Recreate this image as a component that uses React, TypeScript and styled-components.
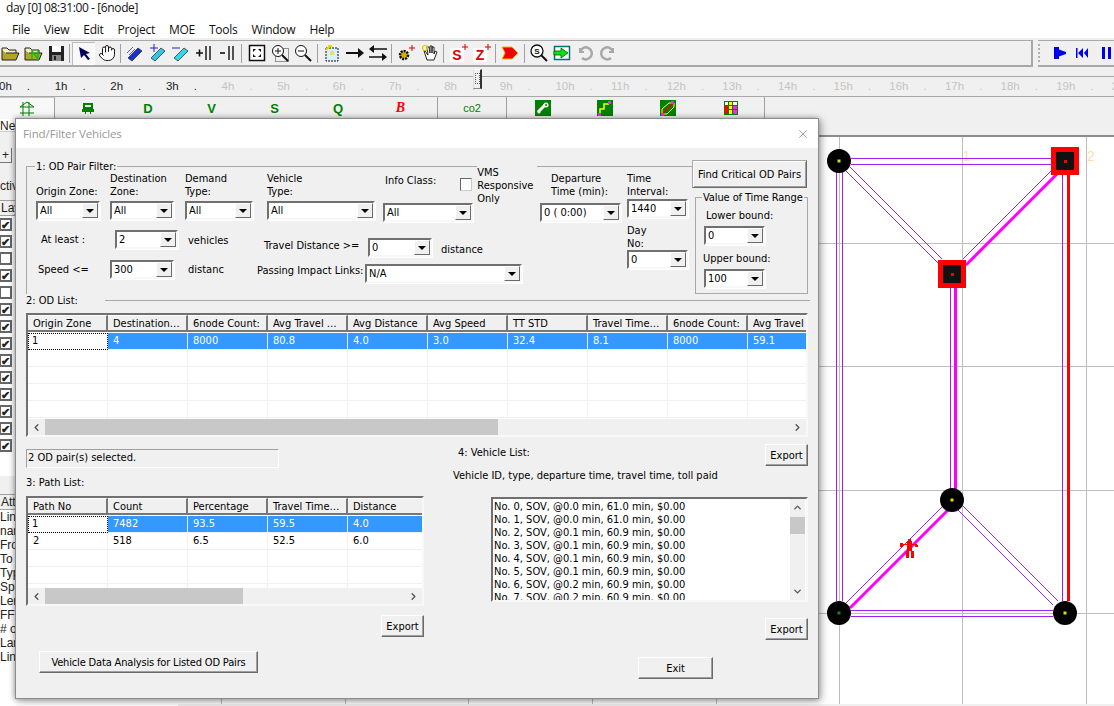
import React from "react";
import styled, { createGlobalStyle } from "styled-components";
import { Hand, ChevronLeft, ChevronRight, ChevronUp, ChevronDown, X } from "lucide-react";

const Global = createGlobalStyle`
	html, body {
		margin: 0;
		padding: 0;
		background: #fff;
		overflow: hidden;
	}
	* { box-sizing: border-box; }
`;

const UI = `"DejaVu Sans Condensed", "DejaVu Sans", sans-serif`;
const SEGOE = `"Open Sans", "Noto Sans", sans-serif`;

const Page = styled.div`
	position: relative;
	display: flex;
	flex-direction: column;
	width: 1114px;
	height: 706px;
	overflow: hidden;
	background: #fff;
	font-family: ${UI};
	font-stretch: condensed;
	font-size: 11px;
	color: #000;
`;

/* ---- window chrome ---- */
const TitleBar = styled.div`
	height: 18px;
	padding: 0 0 0 6px;
	font-family: ${SEGOE};
	font-stretch: normal;
	font-size: 12px;
	letter-spacing: -0.38px;
	line-height: 16px;
	color: #111;
`;

const MenuBar = styled.div`
	display: flex;
	align-items: center;
	gap: 14px;
	height: 20px;
	padding-left: 12px;
	padding-top: 2px;
	font-family: ${SEGOE};
	font-stretch: normal;
	font-size: 12px;
	letter-spacing: -0.25px;
	color: #111;
`;

const ToolStrip = styled.div`
	display: flex;
	height: 29px;
	background: #f0f0f0;
	padding-top: 2px;
`;

const MainTools = styled.div`
	display: flex;
	align-items: center;
	flex: none;
	width: 1035px;
	height: 27px;
	margin-left: -2px;
	border-top: 1px solid #a8a8a8;
	border-bottom: 2px solid #a8a8a8;
	border-right: 2px solid #a8a8a8;
`;

const SideTools = styled.div`
	display: flex;
	align-items: center;
	flex: 1;
	height: 27px;
	margin-left: 5px;
	border-top: 1px solid #a8a8a8;
	border-bottom: 2px solid #a8a8a8;
`;

const Grip = styled.div`
	flex: none;
	width: 2px;
	height: 18px;
	margin-right: 8px;
	border-left: 2px dotted #b0b0b0;
`;

const ToolBtn = styled.div<{ $on?: boolean }>`
	display: flex;
	align-items: center;
	justify-content: center;
	flex: none;
	width: 23px;
	height: 23px;
	background: ${(p) => (p.$on ? "#f8f8f8" : "transparent")};
	box-shadow: ${(p) => (p.$on ? "inset 1px 1px 0 #bbb, inset -1px -1px 0 #fff" : "none")};
`;

const ToolSep = styled.div<{ $w?: number }>`
	flex: none;
	display: flex;
	justify-content: center;
	width: ${(p) => p.$w ?? 5}px;
	height: 19px;
	&::before {
		content: "";
		width: 1px;
		background: #a0a0a0;
	}
`;

const Timeline = styled.div`
	position: relative;
	height: 30px;
	padding-top: 9px;
	background: #f0f0f0;
	border-bottom: 1px solid #a8a8a8;
`;

const Ticks = styled.div`
	display: flex;
	height: 20px;
	padding-top: 2px;
	margin-left: -1px;
	border-top: 1px solid #a8a8a8;
	font-family: "Liberation Sans", sans-serif;
	font-stretch: normal;
	font-size: 11.5px;
	line-height: 14px;
`;

const Tick = styled.div<{ $off?: boolean }>`
	display: flex;
	flex: none;
	width: 55.65px;
	color: ${(p) => (p.$off ? "#c4c4c4" : "#222")};
`;

const TickDot = styled.span`
	margin-left: 15px;
`;

const Thumb = styled.div`
	position: absolute;
	left: 473px;
	top: 2px;
	width: 9px;
	height: 20px;
	background: #f0f0f0;
	border: 1px solid #888;
	border-top-color: #fff;
	border-left-color: #ddd;
	border-right: 2px solid #333;
	&::after {
		content: "";
		display: block;
		width: 3px;
		height: 9px;
		margin: 3px auto 0;
		border: 1px dotted #555;
	}
`;

const TabRow = styled.div`
	display: flex;
	height: 22px;
	background: #f0f0f0;
`;

const TabCell = styled.div<{ $w: number; $sep?: boolean; $on?: boolean; $pl?: number; $pr?: number }>`
	display: flex;
	align-items: center;
	justify-content: center;
	flex: none;
	width: ${(p) => p.$w}px;
	padding: 0 ${(p) => p.$pr ?? 0}px 0 ${(p) => p.$pl ?? 0}px;
	font-family: "Liberation Sans", sans-serif;
	font-stretch: normal;
	font-size: 13px;
	font-weight: 700;
	color: #008000;
	border-right: ${(p) => (p.$sep ? "1px solid #a0a0a0" : "0")};
	background: ${(p) => (p.$on ? "#f8f8f8" : "transparent")};
	border-top: ${(p) => (p.$on ? "1px solid #ccc" : "0")};
`;

const BLetter = styled.span`
	font-family: "Liberation Serif", serif;
	font-style: italic;
	color: #f00;
	font-size: 14px;
`;

const CoLabel = styled.span`
	font-family: "Liberation Sans", sans-serif;
	font-weight: 400;
	font-size: 11px;
`;

const Workspace = styled.div`
	display: flex;
	flex: 1;
	min-height: 0;
`;

/* ---- panel behind the dialog ---- */
const LeftPanel = styled.div`
	display: flex;
	flex-direction: column;
	flex: none;
	width: 178px;
	background: #fff;
	font-family: "Liberation Sans", sans-serif;
	font-stretch: normal;
	font-size: 12px;
	line-height: 14px;
	color: #222;
`;

const NameRow = styled.div`
	height: 13px;
	border-bottom: 1px solid #ccc;
`;

const GreyBlock = styled.div<{ $h: number }>`
	height: ${(p) => p.$h}px;
	background: #f0f0f0;
`;

const PlusBtn = styled.div`
	width: 12px;
	height: 15px;
	margin: 16px 0 16px;
	text-align: center;
	background: #f0f0f0;
	border-right: 1px solid #777;
	border-bottom: 1px solid #777;
`;

const HeadCell = styled.div`
	height: 16px;
	padding: 0 0 0 1px;
	background: #f0f0f0;
	border-top: 1px solid #a0a0a0;
	border-bottom: 1px solid #a0a0a0;
`;

const Checks = styled.div`
	display: flex;
	flex-direction: column;
	gap: 4px;
	padding-top: 2px;
	height: 260px;
`;

const CheckBox = styled.div`
	display: flex;
	align-items: center;
	justify-content: center;
	width: 12px;
	height: 13px;
	background: #fff;
	border: 2px solid #666;
	border-left-width: 1px;
	font-size: 11px;
	font-weight: 700;
	line-height: 10px;
`;

const Attr = styled.div`
	height: 14px;
	white-space: nowrap;
`;

const CanvasCol = styled.div`
	display: flex;
	flex-direction: column;
	flex: 1;
	min-width: 0;
`;

const CanvasTop = styled.div`
	height: 18px;
	background: #f0f0f0;
	border-bottom: 2px solid #8c8c8c;
`;

const CanvasSvg = styled.svg`
	display: block;
	flex: none;
`;

const BottomEdge = styled.div`
	flex: 1;
	background: #f0f0f0;
`;

/* ---- dialog ---- */
const Dialog = styled.div`
	position: absolute;
	left: 15px;
	top: 118px;
	width: 804px;
	height: 581px;
	display: flex;
	flex-direction: column;
	background: #f0f0f0;
	border: 1px solid #8c8c8c;
	box-shadow: 2px 2px 8px rgba(0, 0, 0, 0.35), -1px 0 5px rgba(0, 0, 0, 0.25);
`;

const DialogTitle = styled.div`
	display: flex;
	align-items: center;
	justify-content: space-between;
	flex: none;
	height: 29px;
	padding: 0 8px 0 7px;
	background: #fff;
	font-family: ${SEGOE};
	font-stretch: normal;
	font-size: 11.5px;
	letter-spacing: -0.1px;
	color: #999;
`;

const DialogBody = styled.div`
	display: flex;
	flex-direction: column;
	flex: 1;
	padding: 12px 0 0 10px;
`;

const FilterRow = styled.div`
	display: flex;
	flex: none;
	height: 134px;
`;

const FilterSet = styled.fieldset`
	flex: none;
	width: 666px;
	height: 134px;
	margin: 0;
	padding: 0;
	border: 0;
	border-top: 1px solid #a8a8a8;
	border-left: 1px solid #a8a8a8;
	legend {
		margin-left: 8px;
		padding: 0 1px;
		line-height: 13px;
	}
`;

const FilterInner = styled.div`
	display: flex;
	margin-top: -1px;
`;

const LeftBlock = styled.div`
	display: flex;
	flex-direction: column;
	flex: none;
	width: 594px;
`;

const TopFields = styled.div`
	display: flex;
	height: 50px;
`;

const Field = styled.div<{ $ml?: number; $w: number }>`
	flex: none;
	width: ${(p) => p.$w}px;
	margin-left: ${(p) => p.$ml ?? 0}px;
`;

const FieldLabel = styled.div<{ $h?: number; $start?: boolean; $pl?: number; $mb?: number; $mt?: number }>`
	display: flex;
	flex-direction: column;
	justify-content: ${(p) => (p.$start ? "flex-start" : "flex-end")};
	height: ${(p) => p.$h ?? 26}px;
	margin-top: ${(p) => p.$mt ?? 0}px;
	margin-bottom: ${(p) => p.$mb ?? 3}px;
	padding-left: ${(p) => p.$pl ?? 0}px;
	line-height: 13px;
	white-space: nowrap;
`;

const InfoHead = styled.div`
	display: flex;
	height: 31px;
	padding: 2px 0 0 2px;
	line-height: 13px;
	white-space: nowrap;
`;

const SquareCheck = styled.div`
	flex: none;
	width: 12px;
	height: 13px;
	margin: 4px 5px 0 24px;
	background: #fff;
	border: 1px solid #666;
	border-right-color: #ccc;
	border-bottom-color: #ccc;
`;

const VmsText = styled.div`
	flex: none;
	margin-top: -8px;
	padding-right: 4px;
	background: #f0f0f0;
	line-height: 13px;
`;

const LowerFields = styled.div`
	display: flex;
`;

const LowerLeft = styled.div`
	display: flex;
	flex-direction: column;
	gap: 11px;
	flex: none;
	width: 230px;
	padding-top: 8px;
`;

const LowerMid = styled.div`
	display: flex;
	flex-direction: column;
	gap: 7px;
	padding-top: 16px;
`;

const FieldRow = styled.div<{ $pl?: number }>`
	display: flex;
	align-items: center;
	height: 19px;
	padding-left: ${(p) => p.$pl ?? 0}px;
	white-space: nowrap;
`;

const RowLabel = styled.div<{ $w: number; $up?: number }>`
	flex: none;
	width: ${(p) => p.$w}px;
	margin-bottom: ${(p) => p.$up ?? 0}px;
`;

const Suffix = styled.div<{ $ml: number; $down?: number }>`
	margin-left: ${(p) => p.$ml}px;
	margin-top: ${(p) => p.$down ?? 0}px;
`;

const ComboBox = styled.div<{ $w?: number }>`
	display: flex;
	flex: none;
	align-items: center;
	width: ${(p) => (p.$w ? `${p.$w}px` : "100%")};
	height: 19px;
	padding-left: 2px;
	background: #fff;
	border: 2px solid;
	border-color: #707070 #f8f8f8 #f8f8f8 #707070;
	box-shadow: 1px 1px 0 #fff;
	white-space: nowrap;
`;

const ComboText = styled.div`
	flex: 1;
	overflow: hidden;
`;

const ComboArrow = styled.div`
	display: flex;
	align-items: center;
	justify-content: center;
	flex: none;
	width: 16px;
	height: 15px;
	background: #f0f0f0;
	border: 1px solid;
	border-color: #fff #6a6a6a #6a6a6a #fff;
	&::before {
		content: "";
		border-style: solid;
		border-width: 4px 4px 0;
		border-color: #000 transparent transparent;
	}
`;

const Combo = ({ value, w }: { value: string; w?: number }) => (
	<ComboBox $w={w}>
		<ComboText>{value}</ComboText>
		<ComboArrow />
	</ComboBox>
);

const DepartureField = styled(Field)`
	margin-left: 67px;
`;

const TimeCol = styled.div`
	display: flex;
	flex-direction: column;
	flex: none;
	width: 61px;
	margin-left: 6px;
`;

const RightCol = styled.div`
	display: flex;
	flex-direction: column;
	flex: none;
	width: 116px;
`;

const RaisedButton = styled.div<{ $w?: number; $h?: number; $ml?: number; $mt?: number }>`
	display: flex;
	align-items: center;
	justify-content: center;
	flex: none;
	width: ${(p) => p.$w ?? 43}px;
	height: ${(p) => p.$h ?? 22}px;
	margin-left: ${(p) => p.$ml ?? 0}px;
	margin-top: ${(p) => p.$mt ?? 0}px;
	background: #f0f0f0;
	border: 1px solid;
	border-color: #fff #6a6a6a #6a6a6a #fff;
	box-shadow: inset -1px -1px 0 #a0a0a0;
	white-space: nowrap;
`;

const FindButton = styled(RaisedButton)`
	border-color: #a8a8a8 #6a6a6a #6a6a6a #a8a8a8;
	box-shadow: inset 1px 1px 0 #fff, inset -1px -1px 0 #a0a0a0;
`;

const AnalysisButton = styled(RaisedButton)`
	letter-spacing: -0.16px;
`;

const RangeSet = styled.fieldset`
	width: 113px;
	height: 107px;
	margin: 3px 0 0 3px;
	padding: 0 0 0 9px;
	border: 1px solid #a8a8a8;
	legend {
		margin-left: -3px;
		padding: 0 1px;
		line-height: 13px;
		white-space: nowrap;
		overflow: hidden;
		max-width: 102px;
		letter-spacing: -0.1px;
	}
`;

const RangeLabel = styled.div<{ $ml?: number; $mt: number }>`
	height: 13px;
	margin-top: ${(p) => p.$mt}px;
	margin-left: ${(p) => p.$ml ?? 0}px;
	line-height: 13px;
`;

const RangeCombo = styled.div`
	margin-left: -1px;
	margin-top: 4px;
`;

const SectionHead = styled.div`
	display: flex;
	align-items: center;
	flex: none;
	height: 13px;
	margin-bottom: 6px;
	line-height: 13px;
	&::after {
		content: "";
		flex: none;
		width: 705px;
		height: 1px;
		margin-left: 27px;
		background: #a8a8a8;
	}
`;

const Sunken = styled.div<{ $w: number; $h: number; $ml?: number }>`
	display: flex;
	flex-direction: column;
	flex: none;
	width: ${(p) => p.$w}px;
	height: ${(p) => p.$h}px;
	margin-left: ${(p) => p.$ml ?? 0}px;
	background: #fff;
	border: 2px solid;
	border-color: #707070 #f8f8f8 #f8f8f8 #707070;
	overflow: hidden;
`;

const ListHead = styled.div`
	display: flex;
	flex: none;
	height: 17px;
	background: #f0f0f0;
	margin-bottom: 1px;
`;

const HeaderCell = styled.div`
	flex: none;
	width: 80px;
	height: 17px;
	padding-left: 5px;
	line-height: 15px;
	background: #f0f0f0;
	border-top: 1px solid #fff;
	border-right: 2px solid #777;
	border-bottom: 2px solid #777;
	overflow: hidden;
	white-space: nowrap;
`;

const ListRows = styled.div`
	flex: 1;
	min-height: 0;
	overflow: hidden;
`;

const ListRow = styled.div<{ $sel?: boolean }>`
	display: flex;
	height: 17px;
	background: ${(p) => (p.$sel ? "#3399ff" : "#fff")};
	color: ${(p) => (p.$sel ? "#fff" : "#000")};
`;

const ListCell = styled.div<{ $focus?: boolean }>`
	flex: none;
	width: 80px;
	height: 17px;
	padding-left: ${(p) => (p.$focus ? 4 : 5)}px;
	line-height: 15px;
	border-right: 1px solid #f0f0f0;
	border-bottom: 1px solid #f0f0f0;
	background: ${(p) => (p.$focus ? "#fff" : "transparent")};
	color: ${(p) => (p.$focus ? "#000" : "inherit")};
	outline: ${(p) => (p.$focus ? "1px dotted #000" : "0")};
	outline-offset: -1px;
`;

const HScroll = styled.div`
	display: flex;
	align-items: center;
	flex: none;
	height: 16px;
	background: #f0f0f0;
`;

const ScrollArrow = styled.div`
	display: flex;
	align-items: center;
	justify-content: center;
	flex: none;
	width: 17px;
	height: 16px;
	color: #555;
`;

const Track = styled.div`
	flex: 1;
	height: 16px;
`;

const ScrollThumb = styled.div<{ $w: number }>`
	width: ${(p) => p.$w}px;
	height: 100%;
	background: #c8c8c8;
`;

const LowerSection = styled.div`
	display: flex;
	margin-top: 7px;
`;

const LowerLeftCol = styled.div`
	display: flex;
	flex-direction: column;
	flex: none;
	width: 398px;
`;

const StatusBox = styled.div`
	width: 253px;
	height: 19px;
	margin-top: 5px;
	padding-left: 1px;
	line-height: 16px;
	border: 1px solid;
	border-color: #a0a0a0 #fff #fff #a0a0a0;
`;

const SectionLabel = styled.div<{ $mt?: number; $ml?: number }>`
	height: 13px;
	margin-top: ${(p) => p.$mt ?? 0}px;
	margin-left: ${(p) => p.$ml ?? 0}px;
	line-height: 13px;
	white-space: nowrap;
`;

const AlignEnd = styled.div<{ $mt: number }>`
	display: flex;
	justify-content: flex-end;
	margin-top: ${(p) => p.$mt}px;
`;

const LowerRightCol = styled.div`
	display: flex;
	flex-direction: column;
	flex: none;
	width: 384px;
`;

const VehicleHead = styled.div`
	display: flex;
	justify-content: space-between;
	height: 22px;
`;

const VehicleBox = styled(Sunken)`
	flex-direction: row;
	margin-top: 15px;
`;

const VehicleRows = styled.div`
	flex: 1;
	padding: 1px 0 0 1px;
	line-height: 13px;
	white-space: nowrap;
	overflow: hidden;
`;

const VScroll = styled.div`
	display: flex;
	flex-direction: column;
	align-items: center;
	flex: none;
	width: 15px;
	margin-right: 1px;
	background: #f0f0f0;
`;

const VArrow = styled.div`
	display: flex;
	align-items: center;
	justify-content: center;
	flex: none;
	width: 15px;
	height: 17px;
	color: #555;
`;

const VTrack = styled.div`
	flex: 1;
	width: 100%;
	padding-top: 1px;
`;

const VThumb = styled.div`
	width: 100%;
	height: 17px;
	background: #c8c8c8;
`;

/* ---- toolbar drawings ---- */
const Ico = styled.svg.attrs({ viewBox: "0 0 20 20", width: 20, height: 20 })`
	display: block;
`;

const FolderIcon = ({ n }: { n?: boolean }) => (
	<Ico>
		<path d="M2 7V5h5l2 2h7v3" fill="#f4efb0" stroke="#222" />
		<path d="M6 10h13l-3 7H2V7" fill="#b4a428" stroke="#222" />
		{n && <path d="M9 16V8l6 8V7" fill="none" stroke="#10c010" strokeWidth="1.5" />}
	</Ico>
);

const SaveIcon = () => (
	<Ico>
		<rect x="3" y="3" width="15" height="15" fill="#222" />
		<rect x="6" y="3" width="9" height="6" fill="#fff" />
		<rect x="6" y="12" width="9" height="6" fill="#888" />
		<rect x="8" y="13" width="2" height="4" fill="#222" />
	</Ico>
);

const PointerIcon = () => (
	<Ico>
		<path d="M5 4l11 6-4 1 4 5-2 1-4-5-3 3z" fill="#000060" />
	</Ico>
);

const HandIcon = () => <Hand size={18} strokeWidth={1.3} color="#111" fill="#fff" />;

const BarIcon = ({ fill, sign }: { fill: string; sign?: "+" | "-" | "s" }) => (
	<Ico>
		<path d="M3 15L13 5l4 3L7 18z" fill={fill} stroke="#222" strokeWidth="0.7" />
		{sign === "s" && <path d="M2 10l6-6M4 12l6-6" stroke="#4060e0" />}
		{sign === "+" && <path d="M2 5h8M6 1v8" stroke="#2020d0" />}
		{sign === "-" && <path d="M1 5h8" stroke="#2020d0" />}
	</Ico>
);

const LanesIcon = ({ plus }: { plus?: boolean }) => (
	<Ico>
		<path d={plus ? "M2 10h7M5.500 6.500v7" : "M3 10h5"} stroke="#111" strokeWidth="1.6" fill="none" />
		<path d="M12 3v14M16 3v14" stroke="#111" strokeWidth="1.4" fill="none" />
	</Ico>
);

const ExtentsIcon = () => (
	<Ico>
		<rect x="2.500" y="2.500" width="15" height="15" fill="#fff" stroke="#111" strokeWidth="1.5" />
		<path d="M6 6l3 0-3 3zM14 6v3l-3-3zM6 14v-3l3 3zM14 14h-3l3-3z" fill="#111" />
	</Ico>
);

const ZoomIcon = ({ kind }: { kind: "in" | "out" }) => (
	<Ico>
		{kind === "in" && <rect x="5.500" y="5.500" width="13" height="13" fill="none" stroke="#333" strokeDasharray="1 1" />}
		<circle cx="8" cy="8" r="5.500" fill="#fff" stroke="#111" />
		<path d={kind === "in" ? "M5 8h6M8 5v6" : "M5 8h6"} stroke="#111" />
		<path d="M12 12l6 6" stroke="#111" strokeWidth="2" />
	</Ico>
);

const NodeIcon = () => (
	<Ico>
		<rect x="4" y="5" width="12" height="13" fill="#d8f0ff" stroke="#111" strokeDasharray="2 1" />
		<path d="M4 7l4-4M6 3h4" stroke="#e8d800" strokeWidth="2" />
		<rect x="8" y="8" width="4" height="4" fill="#e8e060" />
	</Ico>
);

const OneWayIcon = () => (
	<Ico>
		<path d="M1 10h14" stroke="#111" strokeWidth="2" />
		<path d="M13 5l6 5-6 5z" fill="#111" />
	</Ico>
);

const TwoWayIcon = () => (
	<Ico>
		<path d="M4 6h15M1 14h15" stroke="#111" strokeWidth="1.5" />
		<path d="M6 2L1 6l5 4zM14 10l5 4-5 4z" fill="#111" />
	</Ico>
);

const GearIcon = () => (
	<Ico>
		<circle cx="8" cy="12" r="4" fill="#d0b000" stroke="#111" strokeWidth="2.500" strokeDasharray="2 1" />
		<path d="M13 5h6M16 2v6" stroke="#e00000" />
	</Ico>
);

const GripHandIcon = () => (
	<Ico>
		<path d="M5 8l3 9h7l3-8-2-1-1 3V4l-2 0v6V3h-2v7l-1-6H8l1 8-3-4z" fill="#fff" stroke="#111" strokeWidth="0.9" />
		<circle cx="6" cy="5" r="2.500" fill="none" stroke="#d8c800" strokeWidth="1.2" />
	</Ico>
);

const SignIcon = ({ letter }: { letter: string }) => (
	<Ico>
		<rect x="1" y="5" width="14" height="14" fill="#fff" />
		<text x="8" y="17" textAnchor="middle" fontFamily="Liberation Sans" fontWeight="700" fontSize="14" fill="#e00000">
			{letter}
		</text>
		<path d="M13 4h6M16 1v6" stroke="#e00000" />
	</Ico>
);

const RedArrowIcon = () => (
	<Ico>
		<path d="M2 4h10l6 6-6 6H2l3-6z" fill="#f00000" stroke="#e8c000" strokeWidth="1" />
	</Ico>
);

const FindSIcon = () => (
	<Ico>
		<circle cx="8" cy="8" r="6" fill="#fff" stroke="#111" strokeWidth="1.3" />
		<text x="8" y="11" textAnchor="middle" fontFamily="Liberation Sans" fontWeight="700" fontSize="8" fill="#111">
			S
		</text>
		<path d="M12 12l6 6" stroke="#111" strokeWidth="2" />
	</Ico>
);

const GoIcon = () => (
	<Ico>
		<rect x="2.500" y="3.500" width="15" height="13" fill="#fff" stroke="#007070" strokeWidth="1.5" />
		<path d="M2 8h7V5l7 5-7 5v-3H2z" fill="#10e010" stroke="#006000" strokeWidth="0.8" />
	</Ico>
);

const TurnGlyph = styled(Ico)<{ $flip?: boolean }>`
	transform: ${(p) => (p.$flip ? "scaleX(-1)" : "none")};
`;

const TurnIcon = ({ flip }: { flip?: boolean }) => (
	<TurnGlyph $flip={flip}>
		<path d="M5 5v4h4" fill="none" stroke="#a8a8a8" strokeWidth="2" />
		<path d="M5 9a6 6 0 1 1 2 6" fill="none" stroke="#a8a8a8" strokeWidth="2.500" />
	</TurnGlyph>
);

const PlayIcon = () => (
	<Ico>
		<path d="M4 4h5v2.500L16 9v2l-7 2.500V16H4z" fill="#0000f0" />
	</Ico>
);

const RewindIcon = () => (
	<Ico>
		<path d="M3 5h1.500v10H3zM10 5v10L5 10zM15 5v10l-4-5z" fill="#0000f0" />
	</Ico>
);

const PauseIcon = () => (
	<Ico>
		<path d="M6 4h3v12H6zM12 4h3v12h-3z" fill="#0000f0" />
	</Ico>
);

/* ---- lower tab drawings ---- */
const SmallIco = styled.svg.attrs({ viewBox: "0 0 16 16", width: 16, height: 16 })`
	display: block;
`;

const GridTabIcon = () => (
	<SmallIco>
		<path d="M4 1v14M10 1v14M1 6h14M1 12h14M1 6l7-5 7 5" fill="none" stroke="#008000" />
	</SmallIco>
);

const CarTabIcon = () => (
	<SmallIco>
		<path d="M3 3h10v6h1v3h-3v2h-1v-2H6v2H5v-2H2V9h1z" fill="#008000" />
		<rect x="5" y="5" width="6" height="2" fill="#f0f0f0" />
	</SmallIco>
);

const WrenchTabIcon = () => (
	<SmallIco>
		<rect width="16" height="16" fill="#008000" />
		<path d="M3 12l7-7" stroke="#fff" strokeWidth="3" />
		<circle cx="11" cy="5" r="2.500" fill="#fff" />
		<circle cx="4" cy="12" r="1.600" fill="#fff" />
		<circle cx="11" cy="5" r="1" fill="#008000" />
	</SmallIco>
);

const RouteTabIcon = () => (
	<SmallIco>
		<rect width="16" height="16" fill="#008000" />
		<path d="M3 14V9h4V4h5" fill="none" stroke="#ffff00" strokeWidth="1.500" />
		<rect x="11" y="1" width="3" height="3" fill="#ff20ff" />
		<rect x="1" y="13" width="3" height="3" fill="#ff20ff" />
	</SmallIco>
);

const PathsTabIcon = () => (
	<SmallIco>
		<rect width="16" height="16" fill="#008000" />
		<path d="M2 14L13 3" stroke="#f00000" strokeWidth="1.500" />
		<path d="M2 14V9l7-6h4M2 14h5l7-7V3" fill="none" stroke="#ffff00" />
		<rect x="11" y="1" width="3" height="3" fill="#ff20ff" />
		<rect x="1" y="13" width="3" height="3" fill="#ff20ff" />
	</SmallIco>
);

const MatrixTabIcon = () => (
	<SmallIco>
		<rect width="14" height="14" x="1" y="1" fill="#008000" />
		<rect x="2" y="2" width="3" height="3" fill="#fff" />
		<rect x="6" y="2" width="3" height="3" fill="#ffff00" />
		<rect x="10" y="2" width="4" height="3" fill="#fff" />
		<rect x="2" y="6" width="3" height="3" fill="#f00" />
		<rect x="6" y="6" width="3" height="3" fill="#ffff00" />
		<rect x="10" y="6" width="4" height="3" fill="#ff20ff" />
		<rect x="2" y="10" width="3" height="4" fill="#f00" />
		<rect x="6" y="10" width="3" height="4" fill="#ffff00" />
		<rect x="10" y="10" width="4" height="4" fill="#ff20ff" />
	</SmallIco>
);

/* ---- network drawing, in page coordinates ---- */
const PURPLE = "#a020f0";

const RoundNode = ({ x, y, tint }: { x: number; y: number; tint: string }) => (
	<g>
		<circle cx={x} cy={y} r={12} fill="#000" />
		<rect x={x - 1.5} y={y - 1.5} width={3} height={3} fill={tint} />
	</g>
);

const SquareNode = ({ x, y }: { x: number; y: number }) => (
	<g shapeRendering="crispEdges">
		<rect x={x - 14} y={y - 14} width={28} height={28} fill="#f00" />
		<rect x={x - 9} y={y - 9} width={18} height={18} fill="#111" />
		<rect x={x - 1.500} y={y - 1.500} width={3} height={3} fill="#f00" />
	</g>
);

const Network = () => {
	const vertical = [221, 345, 468, 592, 716, 839, 962, 1086];
	const horizontal = [242, 365, 489, 612];
	const thin: number[][] = [
		[851, 157.5, 1052, 157.5],
		[851, 163.5, 1052, 163.5],
		[851, 609.5, 1053, 609.5],
		[851, 615.5, 1053, 615.5],
		[836.5, 170, 836.5, 600],
		[842.5, 170, 842.5, 600],
		[950.5, 286, 950.5, 490],
		[1062.5, 174, 1062.5, 600],
		[846, 170, 938, 262],
		[850, 166, 942, 258],
		[1052, 169, 963, 258],
		[943, 505, 845, 603],
		[958, 509, 1053, 604],
		[963, 505, 1058, 600],
	];
	return (
		<CanvasSvg width={936} height={567} viewBox="178 136 936 567">
			<rect x={178} y={136} width={936} height={567} fill="#fff" />
			<g shapeRendering="crispEdges">
				{vertical.map((x) => (
					<line key={x} x1={x + 0.5} y1={136} x2={x + 0.5} y2={703} stroke="#bdbdbd" />
				))}
				{horizontal.map((y) => (
					<line key={y} x1={178} y1={y + 0.5} x2={1114} y2={y + 0.5} stroke="#bdbdbd" />
				))}
			</g>
			<text x={962.5} y={160} fontFamily="Liberation Sans" fontSize={14} fill="#ffdfa8">1</text>
			<text x={1087} y={160} fontFamily="Liberation Sans" fontSize={14} fill="#ffdfa8">2</text>
			<g stroke={PURPLE} shapeRendering="crispEdges">
				{thin.map(([x1, y1, x2, y2]) => (
					<line key={`${x1}-${y1}`} x1={x1} y1={y1} x2={x2} y2={y2} />
				))}
			</g>
			<g stroke="#ff00ff" strokeWidth={3}>
				<line x1={1057} y1={173} x2={966} y2={264} />
				<line x1={955.500} y1={286} x2={955.500} y2={490} />
				<line x1={948} y1={509} x2={850} y2={607} />
			</g>
			<line x1={1068.500} y1={174} x2={1068.500} y2={600} stroke="#f00" strokeWidth={3} />
			<RoundNode x={839} y={160} tint="#c8e020" />
			<SquareNode x={1065} y={160} />
			<SquareNode x={952} y={273} />
			<RoundNode x={952} y={499} tint="#e8d800" />
			<RoundNode x={839} y={612} tint="#208020" />
			<RoundNode x={1065} y={612} tint="#e8d800" />
			<g fill="#f00" shapeRendering="crispEdges">
				<rect x={900} y={542} width={3} height={4} />
				<rect x={903} y={543} width={14} height={1} />
				<rect x={908} y={538} width={3} height={2} />
				<rect x={907} y={540} width={5} height={10} />
				<rect x={906} y={550} width={3} height={7} />
				<rect x={911} y={550} width={3} height={7} />
				<rect x={915} y={544} width={3} height={2} />
			</g>
		</CanvasSvg>
	);
};

const ScrollBarH = ({ thumb }: { thumb: number }) => (
	<HScroll>
		<ScrollArrow><ChevronLeft size={11} strokeWidth={3} /></ScrollArrow>
		<Track><ScrollThumb $w={thumb} /></Track>
		<ScrollArrow><ChevronRight size={11} strokeWidth={3} /></ScrollArrow>
	</HScroll>
);

const ListView = ({ cols, rows, w, h, thumb }: { cols: string[]; rows: string[][]; w: number; h: number; thumb: number }) => (
	<Sunken $w={w} $h={h}>
		<ListHead>
			{cols.map((c, i) => (
				<HeaderCell key={i}>{c}</HeaderCell>
			))}
		</ListHead>
		<ListRows>
			{rows.map((row, r) => (
				<ListRow key={r} $sel={r === 0}>
					{row.map((v, i) => (
						<ListCell key={i} $focus={r === 0 && i === 0}>{v}</ListCell>
					))}
				</ListRow>
			))}
		</ListRows>
		<ScrollBarH thumb={thumb} />
	</Sunken>
);

const hours = Array.from({ length: 21 }, (_, i) => i);

const odCols = ["Origin Zone", "Destination…", "6node Count:", "Avg Travel …", "Avg Distance", "Avg Speed", "TT STD", "Travel Time…", "6node Count:", "Avg Travel"];
const odRows = [
	["1", "4", "8000", "80.8", "4.0", "3.0", "32.4", "8.1", "8000", "59.1"],
	...Array.from({ length: 5 }, () => Array(10).fill("")),
];

const pathCols = ["Path No", "Count", "Percentage", "Travel Time…", "Distance"];
const pathRows = [
	["1", "7482", "93.5", "59.5", "4.0"],
	["2", "518", "6.5", "52.5", "6.0"],
	["", "", "", "", ""],
	["", "", "", "", ""],
	["", "", "", "", ""],
];

const vehicles = [
	"No. 0, SOV, @0.0 min, 61.0 min, $0.00",
	"No. 1, SOV, @0.0 min, 61.0 min, $0.00",
	"No. 2, SOV, @0.1 min, 60.9 min, $0.00",
	"No. 3, SOV, @0.1 min, 60.9 min, $0.00",
	"No. 4, SOV, @0.1 min, 60.9 min, $0.00",
	"No. 5, SOV, @0.1 min, 60.9 min, $0.00",
	"No. 6, SOV, @0.2 min, 60.9 min, $0.00",
	"No. 7, SOV, @0.2 min, 60.9 min, $0.00",
];

const checks = [1, 1, 0, 1, 0, 1, 1, 1, 1, 1, 1, 1, 1, 1];
const attrs = ["Link", "name", "From", "To N", "Type", "Speed", "Length", "FFTT", "# of", "Lanes", "Link"];

export default function App() {
	return (
		<Page>
			<Global />
			<TitleBar>day [0] 08:31:00 - [6node]</TitleBar>
			<MenuBar>
				{["File", "View", "Edit", "Project", "MOE", "Tools", "Window", "Help"].map((m) => (
					<span key={m}>{m}</span>
				))}
			</MenuBar>
			<ToolStrip>
				<MainTools>
					<ToolBtn><FolderIcon /></ToolBtn>
					<ToolBtn><FolderIcon n /></ToolBtn>
					<ToolBtn><SaveIcon /></ToolBtn>
					<ToolSep />
					<ToolBtn $on><PointerIcon /></ToolBtn>
					<ToolBtn><HandIcon /></ToolBtn>
					<ToolSep />
					<ToolBtn><BarIcon fill="#1830d0" sign="s" /></ToolBtn>
					<ToolBtn><BarIcon fill="#30c8e8" sign="+" /></ToolBtn>
					<ToolBtn><BarIcon fill="#30d8e8" sign="-" /></ToolBtn>
					<ToolBtn><LanesIcon plus /></ToolBtn>
					<ToolBtn><LanesIcon /></ToolBtn>
					<ToolSep $w={7} />
					<ToolBtn><ExtentsIcon /></ToolBtn>
					<ToolBtn><ZoomIcon kind="in" /></ToolBtn>
					<ToolBtn><ZoomIcon kind="out" /></ToolBtn>
					<ToolSep $w={6} />
					<ToolBtn><NodeIcon /></ToolBtn>
					<ToolBtn><OneWayIcon /></ToolBtn>
					<ToolBtn><TwoWayIcon /></ToolBtn>
					<ToolSep />
					<ToolBtn><GearIcon /></ToolBtn>
					<ToolBtn><GripHandIcon /></ToolBtn>
					<ToolSep $w={7} />
					<ToolBtn><SignIcon letter="S" /></ToolBtn>
					<ToolBtn><SignIcon letter="Z" /></ToolBtn>
					<ToolSep />
					<ToolBtn><RedArrowIcon /></ToolBtn>
					<ToolSep $w={6} />
					<ToolBtn><FindSIcon /></ToolBtn>
					<ToolBtn><GoIcon /></ToolBtn>
					<ToolBtn><TurnIcon /></ToolBtn>
					<ToolBtn><TurnIcon flip /></ToolBtn>
				</MainTools>
				<SideTools>
					<Grip />
					<ToolBtn><PlayIcon /></ToolBtn>
					<ToolBtn><RewindIcon /></ToolBtn>
					<ToolBtn><PauseIcon /></ToolBtn>
				</SideTools>
			</ToolStrip>
			<Timeline>
				<Ticks>
					{hours.map((h) => (
						<Tick key={h} $off={h > 3}>
							{h}h<TickDot>.</TickDot>
						</Tick>
					))}
				</Ticks>
				<Thumb />
			</Timeline>
			<TabRow>
				<TabCell $w={55} $sep $on><GridTabIcon /></TabCell>
				<TabCell $w={61} $pl={5}><CarTabIcon /></TabCell>
				<TabCell $w={64}>D</TabCell>
				<TabCell $w={63}>V</TabCell>
				<TabCell $w={63}>S</TabCell>
				<TabCell $w={64}>Q</TabCell>
				<TabCell $w={68} $sep $pr={6}><BLetter>B</BLetter></TabCell>
				<TabCell $w={69} $sep><CoLabel>co2</CoLabel></TabCell>
				<TabCell $w={71}><WrenchTabIcon /></TabCell>
				<TabCell $w={54}><RouteTabIcon /></TabCell>
				<TabCell $w={72}><PathsTabIcon /></TabCell>
				<TabCell $w={61} $sep $pr={7}><MatrixTabIcon /></TabCell>
			</TabRow>
			<Workspace>
				<LeftPanel>
					<NameRow>Ne</NameRow>
					<GreyBlock $h={68}>
						<PlusBtn>+</PlusBtn>
						<span>ctiv</span>
					</GreyBlock>
					<HeadCell>Lay</HeadCell>
					<Checks>
						{checks.map((c, i) => (
							<CheckBox key={i}>{c ? "✔" : ""}</CheckBox>
						))}
					</Checks>
					<GreyBlock $h={18} />
					<HeadCell>Att</HeadCell>
					{attrs.map((a, i) => (
						<Attr key={i}>{a}</Attr>
					))}
				</LeftPanel>
				<CanvasCol>
					<CanvasTop />
					<Network />
					<BottomEdge />
				</CanvasCol>
			</Workspace>

			<Dialog>
				<DialogTitle>
					<span>Find/Filter Vehicles</span>
					<X size={14} strokeWidth={1} color="#666" />
				</DialogTitle>
				<DialogBody>
					<FilterRow>
						<FilterSet>
							<legend>1: OD Pair Filter:</legend>
							<FilterInner>
								<LeftBlock>
									<TopFields>
										<Field $ml={9} $w={64}>
											<FieldLabel>Origin Zone:</FieldLabel>
											<Combo value="All" />
										</Field>
										<Field $ml={10} $w={64}>
											<FieldLabel><span>Destination</span><span>Zone:</span></FieldLabel>
											<Combo value="All" />
										</Field>
										<Field $ml={11} $w={68}>
											<FieldLabel><span>Demand</span><span>Type:</span></FieldLabel>
											<Combo value="All" />
										</Field>
										<Field $ml={14} $w={108}>
											<FieldLabel><span>Vehicle</span><span>Type:</span></FieldLabel>
											<Combo value="All" />
										</Field>
										<Field $ml={8} $w={90}>
											<InfoHead>
												<span>Info Class:</span>
												<SquareCheck />
												<VmsText>VMS<br />Responsive<br />Only</VmsText>
											</InfoHead>
											<Combo value="All" />
										</Field>
										<DepartureField $w={81}>
											<FieldLabel $h={28} $start $pl={11}><span>Departure</span><span>Time (min):</span></FieldLabel>
											<Combo value="0 ( 0:00)" />
										</DepartureField>
									</TopFields>
									<LowerFields>
										<LowerLeft>
											<FieldRow $pl={14}>
												<RowLabel $w={74}>At least :</RowLabel>
												<Combo value="2" w={63} />
												<Suffix $ml={10} $down={2}>vehicles</Suffix>
											</FieldRow>
											<FieldRow $pl={11}>
												<RowLabel $w={72}>Speed &lt;=</RowLabel>
												<Combo value="300" w={64} />
												<Suffix $ml={14}>distanc</Suffix>
											</FieldRow>
										</LowerLeft>
										<LowerMid>
											<FieldRow $pl={7}>
												<RowLabel $w={104} $up={4}>Travel Distance &gt;=</RowLabel>
												<Combo value="0" w={64} />
												<Suffix $ml={9} $down={4}>distance</Suffix>
											</FieldRow>
											<FieldRow>
												<RowLabel $w={108} $up={6}>Passing Impact Links:</RowLabel>
												<Combo value="N/A" w={157} />
											</FieldRow>
										</LowerMid>
									</LowerFields>
								</LeftBlock>
								<TimeCol>
									<FieldLabel $h={24} $start><span>Time</span><span>Interval:</span></FieldLabel>
									<Combo value="1440" />
									<FieldLabel $mt={6} $mb={0}><span>Day</span><span>No:</span></FieldLabel>
									<Combo value="0" />
								</TimeCol>
							</FilterInner>
						</FilterSet>
						<RightCol>
							<FindButton $w={115} $h={28}>Find Critical OD Pairs</FindButton>
							<RangeSet>
								<legend>Value of Time Range</legend>
								<RangeLabel $ml={1} $mt={5}>Lower bound:</RangeLabel>
								<RangeCombo><Combo value="0" w={61} /></RangeCombo>
								<RangeLabel $ml={-2} $mt={7}>Upper bound:</RangeLabel>
								<RangeCombo><Combo value="100" w={61} /></RangeCombo>
							</RangeSet>
						</RightCol>
					</FilterRow>
					<SectionHead>2: OD List:</SectionHead>
					<ListView cols={odCols} rows={odRows} w={782} h={124} thumb={453} />
					<LowerSection>
						<LowerLeftCol>
							<StatusBox>2 OD pair(s) selected.</StatusBox>
							<SectionLabel $mt={8}>3: Path List:</SectionLabel>
							<AlignEnd $mt={7}>
								<ListView cols={pathCols} rows={pathRows} w={398} h={110} thumb={198} />
							</AlignEnd>
							<AlignEnd $mt={9}>
								<RaisedButton>Export</RaisedButton>
							</AlignEnd>
							<AnalysisButton $w={219} $ml={13} $mt={14}>
								Vehicle Data Analysis for Listed OD Pairs
							</AnalysisButton>
						</LowerLeftCol>
						<LowerRightCol>
							<VehicleHead>
								<SectionLabel $ml={34} $mt={2}>4: Vehicle List:</SectionLabel>
								<RaisedButton>Export</RaisedButton>
							</VehicleHead>
							<SectionLabel $ml={29} $mt={3}>Vehicle ID, type, departure time, travel time, toll paid</SectionLabel>
							<VehicleBox $w={317} $h={105} $ml={67}>
								<VehicleRows>
									{vehicles.map((v) => (
										<div key={v}>{v}</div>
									))}
								</VehicleRows>
								<VScroll>
									<VArrow><ChevronUp size={11} strokeWidth={3} /></VArrow>
									<VTrack><VThumb /></VTrack>
									<VArrow><ChevronDown size={11} strokeWidth={3} /></VArrow>
								</VScroll>
							</VehicleBox>
							<AlignEnd $mt={16}>
								<RaisedButton>Export</RaisedButton>
							</AlignEnd>
							<RaisedButton $w={75} $ml={214} $mt={17}>Exit</RaisedButton>
						</LowerRightCol>
					</LowerSection>
				</DialogBody>
			</Dialog>
		</Page>
	);
}
